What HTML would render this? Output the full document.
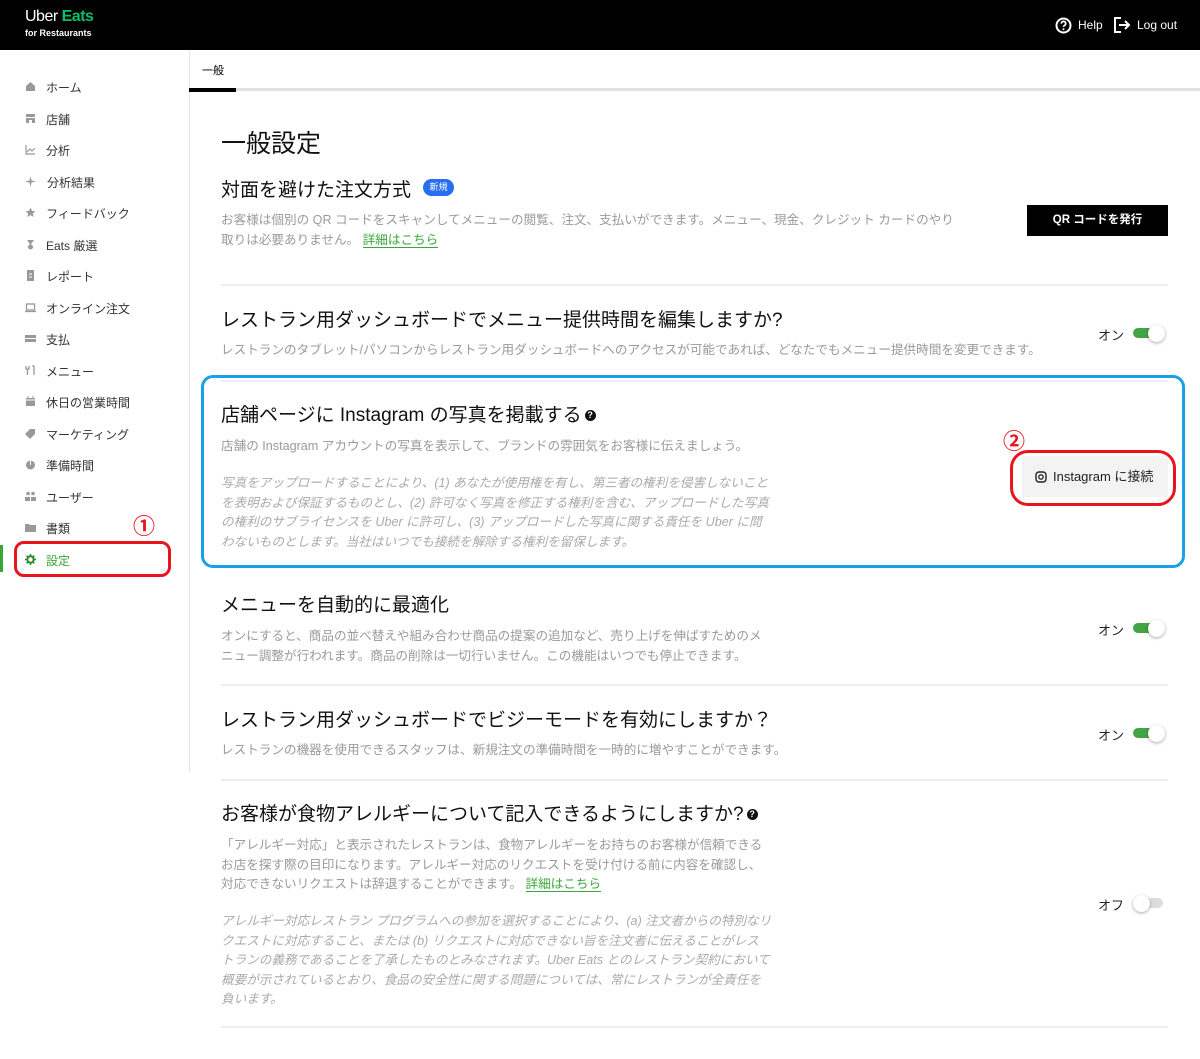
<!DOCTYPE html>
<html><head><meta charset="utf-8"><style>
*{margin:0;padding:0;box-sizing:border-box}
body{width:1200px;height:1059px;position:relative;background:#fff;font-family:"Liberation Sans","Noto Sans CJK JP",sans-serif;color:#000;overflow:hidden}
.a{position:absolute;white-space:nowrap}
.hdr{left:0;top:0;width:1200px;height:50px;background:#000}
.nav{font-size:12px;color:#333;left:46px}
.ic{left:25px;width:11px;height:11px}
.h{font-size:19px;left:221px;color:#111}
.d{font-size:12.6px;left:221px;color:#9a9a9a;line-height:19.5px}
.i{font-style:italic;color:#aaa}
.g{color:#3aa63a;border-bottom:1px solid #3aa63a}
.hr{left:221px;width:947px;height:2px;background:#eee}
.tg{width:33px;height:16px}
.tg .t{position:absolute;left:0;top:3px;width:30px;height:10px;border-radius:5px;background:#43a443}
.tg .k{position:absolute;left:15px;top:0;width:17px;height:17px;border-radius:50%;background:#fff;box-shadow:0 1px 3px rgba(0,0,0,.35)}
.tg.off .t{background:#ddd}.tg.off .k{left:0}
.on{font-size:13px;color:#222}
.q{display:inline-block;width:11px;height:11px;border-radius:50%;background:#111;color:#fff;font-size:9px;font-weight:bold;line-height:11px;text-align:center;vertical-align:3px;margin-left:3px}
.num{color:#e8141e;font-size:22px;font-weight:bold}
</style></head><body>
<div class="a hdr"></div>
<div class="a" style="left:25px;top:8px;font-size:16px;color:#fff;letter-spacing:-0.5px">Uber <span style="color:#06c167;font-weight:bold">Eats</span></div>
<div class="a" style="left:25px;top:28px;font-size:9px;color:#fff;font-weight:bold">for Restaurants</div>
<svg class="a" style="left:1055px;top:17px" width="17" height="17" viewBox="0 0 17 17"><circle cx="8.5" cy="8.5" r="7" fill="none" stroke="#fff" stroke-width="2"/><path d="M6.3 6.6a2.2 2.2 0 1 1 3 2c-.6.3-.8.6-.8 1.3" fill="none" stroke="#fff" stroke-width="1.7"/><circle cx="8.5" cy="12.2" r="1" fill="#fff"/></svg>
<div class="a" style="left:1078px;top:18px;font-size:12px;color:#fff">Help</div>
<svg class="a" style="left:1113px;top:16px" width="18" height="18" viewBox="0 0 18 18"><path d="M8 2H2v14h6" fill="none" stroke="#fff" stroke-width="2"/><path d="M6 9h10M12 5l4 4-4 4" fill="none" stroke="#fff" stroke-width="2"/></svg>
<div class="a" style="left:1137px;top:18px;font-size:12px;color:#fff">Log out</div>

<div class="a" style="left:189px;top:50px;width:1px;height:722px;background:#e6e6e6"></div>
<div class="a" style="left:202px;top:62px;font-size:11px">一般</div>
<div class="a" style="left:189px;top:88px;width:1011px;height:3px;background:#e2e2e2"></div>
<div class="a" style="left:189px;top:88px;width:47px;height:4px;background:#000"></div>

<svg class="a ic" style="top:81px" viewBox="0 0 11 11"><path d="M1 5L5.5 1 10 5v5H1z" fill="#999"/></svg><div class="a nav" style="top:79px">ホーム</div>
<svg class="a ic" style="top:113px" viewBox="0 0 11 11"><path d="M1 1h9v3H1zM1 5h9v5H7V7H4v3H1z" fill="#999"/></svg><div class="a nav" style="top:111px">店舗</div>
<svg class="a ic" style="top:144px" viewBox="0 0 11 11"><path d="M1 1v9h9M2 8l3-3 2 2 3-3" fill="none" stroke="#999" stroke-width="1.2"/></svg><div class="a nav" style="top:142px">分析</div>
<svg class="a ic" style="top:176px" viewBox="0 0 11 11"><path d="M5.5 0L6.5 4.5 11 5.5 6.5 6.5 5.5 11 4.5 6.5 0 5.5 4.5 4.5z" fill="#999"/></svg><div class="a nav" style="top:174px;left:47px">分析結果</div>
<svg class="a ic" style="top:207px" viewBox="0 0 11 11"><path d="M5.5 0.5l1.5 3.4 3.5.3-2.7 2.3.9 3.5-3.2-1.9-3.2 1.9.9-3.5L.5 4.2 4 3.9z" fill="#999"/></svg><div class="a nav" style="top:205px">フィードバック</div>
<svg class="a ic" style="top:239px" viewBox="0 0 11 11"><path d="M2 1h7L5.5 6z" fill="#999"/><circle cx="5.5" cy="8" r="2.5" fill="#999"/></svg><div class="a nav" style="top:237px">Eats 厳選</div>
<svg class="a ic" style="top:270px" viewBox="0 0 11 11"><path d="M2 0h7v11H2z" fill="#999"/><path d="M4 4h3M4 7h3" stroke="#fff"/></svg><div class="a nav" style="top:268px">レポート</div>
<svg class="a ic" style="top:302px" viewBox="0 0 11 11"><rect x="1.5" y="2" width="8" height="6" fill="none" stroke="#999" stroke-width="1.3"/><path d="M0 9.5h11" stroke="#999" stroke-width="1.3"/></svg><div class="a nav" style="top:300px">オンライン注文</div>
<svg class="a ic" style="top:333px" viewBox="0 0 11 11"><path d="M0 2h11v3H0zM0 6h11v3H0z" fill="#999"/></svg><div class="a nav" style="top:331px">支払</div>
<svg class="a ic" style="top:365px" viewBox="0 0 11 11"><path d="M1 1v3h3V1M2.5 4v6M7 1h2v9" stroke="#999" stroke-width="1.3" fill="none"/></svg><div class="a nav" style="top:363px">メニュー</div>
<svg class="a ic" style="top:396px" viewBox="0 0 11 11"><path d="M1 2h9v8H1z" fill="#999"/><path d="M3 0v3M8 0v3" stroke="#999"/><path d="M1 4h9" stroke="#fff"/></svg><div class="a nav" style="top:394px">休日の営業時間</div>
<svg class="a ic" style="top:428px" viewBox="0 0 11 11"><path d="M5 1h5v5L5 11 0 6z" fill="#999"/></svg><div class="a nav" style="top:426px">マーケティング</div>
<svg class="a ic" style="top:459px" viewBox="0 0 11 11"><circle cx="5.5" cy="6" r="4.5" fill="#999"/><path d="M5.5 6V1.5" stroke="#fff"/></svg><div class="a nav" style="top:457px">準備時間</div>
<svg class="a ic" style="top:491px" viewBox="0 0 11 11"><circle cx="3" cy="2.5" r="1.8" fill="#999"/><circle cx="8" cy="2.5" r="1.8" fill="#999"/><path d="M0 6h5v4H0zM6 6h5v4H6z" fill="#999"/></svg><div class="a nav" style="top:489px">ユーザー</div>
<svg class="a ic" style="top:522px" viewBox="0 0 11 11"><path d="M0 2h4l1 1h6v7H0z" fill="#999"/></svg><div class="a nav" style="top:520px">書類</div>
<svg class="a ic" style="top:554px" viewBox="0 0 11 11"><circle cx="5.5" cy="5.5" r="3.2" fill="none" stroke="#2e8b2e" stroke-width="2"/><path d="M5.5 0v2M5.5 9v2M0 5.5h2M9 5.5h2M1.6 1.6l1.4 1.4M8 8l1.4 1.4M1.6 9.4L3 8M8 3l1.4-1.4" stroke="#2e8b2e" stroke-width="1.5"/></svg><div class="a nav" style="top:552px;color:#3aa63a">設定</div>
<div class="a" style="left:0;top:545px;width:3px;height:27px;background:#3aa63a"></div>
<div class="a" style="left:14px;top:541px;width:157px;height:36px;border:3px solid #e8141e;border-radius:10px"></div>
<div class="a num" style="left:133px;top:509px">①</div>

<div class="a" style="left:221px;top:124px;font-size:25px;color:#111">一般設定</div>

<div class="a h" style="top:175px">対面を避けた注文方式</div>
<div class="a" style="left:423px;top:179px;width:31px;height:17px;border-radius:9px;background:#276ef1;color:#fff;font-size:9px;line-height:17px;text-align:center">新規</div>
<div class="a d" style="top:211px">お客様は個別の QR コードをスキャンしてメニューの閲覧、注文、支払いができます。メニュー、現金、クレジット カードのやり<br>取りは必要ありません。 <span class="g">詳細はこちら</span></div>
<div class="a" style="left:1027px;top:205px;width:141px;height:31px;background:#000;color:#fff;font-size:11.5px;font-weight:bold;line-height:31px;text-align:center">QR コードを発行</div>
<div class="a hr" style="top:284px"></div>

<div class="a h" style="top:305px">レストラン用ダッシュボードでメニュー提供時間を編集しますか?</div>
<div class="a d" style="top:341px">レストランのタブレット/パソコンからレストラン用ダッシュボードへのアクセスが可能であれば、どなたでもメニュー提供時間を変更できます。</div>
<div class="a on" style="left:1098px;top:325px">オン</div>
<div class="a tg" style="left:1133px;top:325px"><div class="t"></div><div class="k"></div></div>

<div class="a hr" style="top:380px"></div>
<div class="a h" style="top:400px">店舗ページに Instagram の写真を掲載する<span class="q">?</span></div>
<div class="a d" style="top:437px">店舗の Instagram アカウントの写真を表示して、ブランドの雰囲気をお客様に伝えましょう。</div>
<div class="a d i" style="top:474px">写真をアップロードすることにより、(1) あなたが使用権を有し、第三者の権利を侵害しないこと<br>を表明および保証するものとし、(2) 許可なく写真を修正する権利を含む、アップロードした写真<br>の権利のサブライセンスを Uber に許可し、(3) アップロードした写真に関する責任を Uber に問<br>わないものとします。当社はいつでも接続を解除する権利を留保します。</div>
<div class="a" style="left:1022px;top:456px;width:146px;height:41px;background:#f3f3f3;font-size:13px;line-height:41px;color:#222;padding-left:13px"><svg style="vertical-align:-2px;margin-right:6px" width="12" height="12" viewBox="0 0 12 12"><rect x="1" y="1" width="10" height="10" rx="3" fill="none" stroke="#222" stroke-width="1.4"/><circle cx="6" cy="6" r="2.2" fill="none" stroke="#222" stroke-width="1.3"/></svg>Instagram に接続</div>
<div class="a" style="left:1010px;top:450px;width:166px;height:56px;border:3px solid #e8141e;border-radius:18px"></div>
<div class="a num" style="left:1003px;top:424px">②</div>
<div class="a" style="left:201px;top:375px;width:984px;height:193px;border:3px solid #1aa0e6;border-radius:12px"></div>

<div class="a h" style="top:590px">メニューを自動的に最適化</div>
<div class="a d" style="top:627px">オンにすると、商品の並べ替えや組み合わせ商品の提案の追加など、売り上げを伸ばすためのメ<br>ニュー調整が行われます。商品の削除は一切行いません。この機能はいつでも停止できます。</div>
<div class="a on" style="left:1098px;top:620px">オン</div>
<div class="a tg" style="left:1133px;top:620px"><div class="t"></div><div class="k"></div></div>
<div class="a hr" style="top:684px"></div>

<div class="a h" style="top:705px">レストラン用ダッシュボードでビジーモードを有効にしますか？</div>
<div class="a d" style="top:741px">レストランの機器を使用できるスタッフは、新規注文の準備時間を一時的に増やすことができます。</div>
<div class="a on" style="left:1098px;top:725px">オン</div>
<div class="a tg" style="left:1133px;top:725px"><div class="t"></div><div class="k"></div></div>
<div class="a hr" style="top:779px"></div>

<div class="a h" style="top:799px">お客様が食物アレルギーについて記入できるようにしますか?<span class="q">?</span></div>
<div class="a d" style="top:836px">「アレルギー対応」と表示されたレストランは、食物アレルギーをお持ちのお客様が信頼できる<br>お店を探す際の目印になります。アレルギー対応のリクエストを受け付ける前に内容を確認し、<br>対応できないリクエストは辞退することができます。 <span class="g">詳細はこちら</span></div>
<div class="a d i" style="top:912px">アレルギー対応レストラン プログラムへの参加を選択することにより、(a) 注文者からの特別なリ<br>クエストに対応すること、または (b) リクエストに対応できない旨を注文者に伝えることがレス<br>トランの義務であることを了承したものとみなされます。Uber Eats とのレストラン契約において<br>概要が示されているとおり、食品の安全性に関する問題については、常にレストランが全責任を<br>負います。</div>
<div class="a on" style="left:1098px;top:895px">オフ</div>
<div class="a tg off" style="left:1133px;top:895px"><div class="t"></div><div class="k"></div></div>
<div class="a hr" style="top:1026px"></div>
</body></html>
